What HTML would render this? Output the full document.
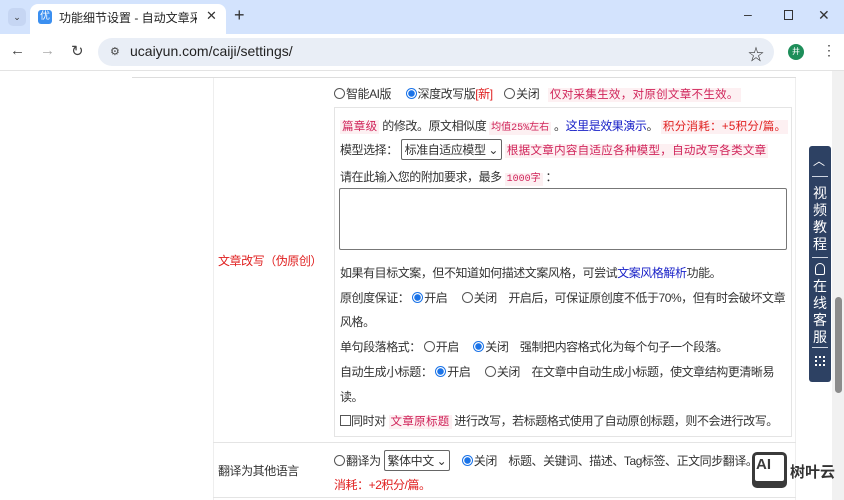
<!DOCTYPE html>
<html><head><meta charset="utf-8"><style>
*{margin:0;padding:0;box-sizing:border-box}
body{width:844px;height:500px;overflow:hidden;background:#fff;font-family:"Liberation Sans","Noto Sans CJK SC",sans-serif;font-size:12px;color:#333;position:relative}
.abs{position:absolute;white-space:nowrap}
.c{letter-spacing:-0.45px}
.tabbar{position:absolute;left:0;top:0;width:844px;height:34px;background:#d3e3fd}
.toolbar{position:absolute;left:0;top:34px;width:844px;height:36px;background:#fff}
.tab{position:absolute;left:30px;top:4px;width:196px;height:30px;background:#fff;border-radius:8px 8px 0 0}
.url{position:absolute;left:98px;top:38px;width:676px;height:28px;background:#e9eef6;border-radius:14px}
.pink{background:#fdf0f2;color:#d0245a;padding:1px 2px;font-family:"Liberation Mono","Noto Sans CJK SC",monospace;font-size:10px;letter-spacing:0}
.pk{background:#fdf0f2;color:#d0245a;padding:1px 2px;font-size:11.5px;letter-spacing:0.3px}
.red{color:#e02020}
.blue{color:#1a22c8}
.radio{display:inline-block;width:11px;height:11px;border:1px solid #555;border-radius:50%;vertical-align:-1px;margin-right:1px}
.radio.on{border:1px solid #1a73e8;background:radial-gradient(circle,#1a73e8 3px,#fff 3.5px)}
.sel{display:inline-block;border:1px solid #666;border-radius:2px;padding:1px 3px;font-size:12px}
</style></head><body>
<div class="tabbar"></div>
<div class="abs" style="left:8px;top:8px;width:18px;height:18px;border-radius:5px;background:#c6d6f3;font-size:9px;text-align:center;line-height:18px">⌄</div>
<div class="tab"></div>
<div class="abs" style="left:38px;top:10px;width:14px;height:14px;background:#3b8ff0;border-radius:3px;color:#fff;font-size:10px;text-align:center;line-height:14px">优</div>
<div class="abs" style="left:59px;top:9px;width:138px;overflow:hidden;font-size:12px;color:#222">功能细节设置 - 自动文章采集II</div>
<div class="abs" style="left:206px;top:8px;font-size:13px;color:#333">✕</div>
<div class="abs" style="left:234px;top:5px;font-size:18px;color:#333">+</div>
<div class="abs" style="left:744px;top:6px;font-size:14px">–</div>
<div class="abs" style="left:784px;top:10px;width:9px;height:10px;border:1px solid #333"></div>
<div class="abs" style="left:818px;top:7px;font-size:14px">✕</div>
<div class="toolbar"></div>
<div class="abs" style="left:10px;top:42px;font-size:15px;color:#444">←</div>
<div class="abs" style="left:40px;top:42px;font-size:15px;color:#aaa">→</div>
<div class="abs" style="left:71px;top:42px;font-size:15px;color:#444">↻</div>
<div class="url"></div>
<div class="abs" style="left:110px;top:45px;font-size:11px;color:#444">⚙</div>
<div class="abs" style="left:130px;top:43px;font-size:14px;color:#222">ucaiyun.com/caiji/settings/</div>
<div class="abs" style="left:748px;top:41px;font-size:16px;color:#333">☆</div>
<div class="abs" style="left:788px;top:44px;width:16px;height:16px;border-radius:50%;background:#1e8e5a;color:#fff;font-size:8px;text-align:center;line-height:16px">井</div>
<div class="abs" style="left:822px;top:42px;font-size:14px;color:#444">⋮</div>
<div class="abs" style="left:0;top:70px;width:844px;height:1px;background:#e3e3e3"></div>
<!-- page -->
<div class="abs" style="left:132px;top:77px;width:664px;height:1px;background:#ddd"></div>
<div class="abs" style="left:213px;top:78px;width:1px;height:422px;background:#eee"></div>
<div class="abs" style="left:795px;top:78px;width:1px;height:422px;background:#eee"></div>
<div class="abs c" style="left:334px;top:85px"><span class="radio"></span>智能AI版 &nbsp;&nbsp;&nbsp; <span class="radio on"></span>深度改写版<span class="red">[新]</span> &nbsp;&nbsp; <span class="radio"></span>关闭 &nbsp; <span class="pk">仅对采集生效，对原创文章不生效。</span></div>
<div class="abs" style="left:334px;top:107px;width:458px;height:330px;border:1px solid #e4e4e4"></div>
<div class="abs c" style="left:340px;top:117px"><span class="pk">篇章级</span> 的修改。原文相似度 <span class="pink">均值25%左右</span> 。<span class="blue">这里是效果演示</span>。 <span class="pk" style="color:#e02020">积分消耗：+5积分/篇。</span></div>
<div class="abs c" style="left:340px;top:139px">模型选择： <span class="sel">标准自适应模型 ⌄</span> <span class="pk">根据文章内容自适应各种模型，自动改写各类文章</span></div>
<div class="abs c" style="left:340px;top:168px">请在此输入您的附加要求，最多 <span class="pink">1000字</span> ：</div>
<div class="abs" style="left:339px;top:188px;width:448px;height:62px;border:1px solid #777;border-radius:2px"></div>
<div class="abs c" style="left:340px;top:264px">如果有目标文案，但不知道如何描述文案风格，可尝试<span class="blue">文案风格解析</span>功能。</div>
<div class="abs c" style="left:340px;top:289px">原创度保证： <span class="radio on"></span>开启 &nbsp;&nbsp;&nbsp; <span class="radio"></span>关闭 &nbsp;&nbsp; 开启后，可保证原创度不低于70%，但有时会破坏文章</div>
<div class="abs c" style="left:340px;top:313px">风格。</div>
<div class="abs c" style="left:340px;top:338px">单句段落格式： <span class="radio"></span>开启 &nbsp;&nbsp;&nbsp; <span class="radio on"></span>关闭 &nbsp;&nbsp; 强制把内容格式化为每个句子一个段落。</div>
<div class="abs c" style="left:340px;top:363px">自动生成小标题： <span class="radio on"></span>开启 &nbsp;&nbsp;&nbsp; <span class="radio"></span>关闭 &nbsp;&nbsp; 在文章中自动生成小标题，使文章结构更清晰易</div>
<div class="abs c" style="left:340px;top:388px">读。</div>
<div class="abs c" style="left:340px;top:412px"><span style="display:inline-block;width:11px;height:11px;border:1px solid #555;vertical-align:-1px"></span>同时对 <span class="pk">文章原标题</span> 进行改写，若标题格式使用了自动原创标题，则不会进行改写。</div>
<div class="abs red c" style="left:218px;top:252px">文章改写（伪原创）</div>
<div class="abs" style="left:213px;top:442px;width:583px;height:1px;background:#e4e4e4"></div>
<div class="abs c" style="left:218px;top:462px">翻译为其他语言</div>
<div class="abs c" style="left:334px;top:450px"><span class="radio"></span>翻译为 <span class="sel">繁体中文 ⌄</span> &nbsp;&nbsp; <span class="radio on"></span>关闭 &nbsp;&nbsp; 标题、关键词、描述、Tag标签、正文同步翻译。<span class="red">积分</span></div>
<div class="abs red c" style="left:334px;top:476px">消耗：+2积分/篇。</div>
<div class="abs" style="left:213px;top:497px;width:583px;height:1px;background:#e4e4e4"></div>
<!-- side panel -->
<div class="abs" style="left:809px;top:146px;width:22px;height:236px;background:#2d4163;border-radius:3px"></div>
<div class="abs" style="left:813px;top:152px;color:#fff;font-size:12px">︿</div>
<div class="abs" style="left:812px;top:176px;width:16px;height:1px;background:#cfd6e2"></div>
<div class="abs" style="left:812px;top:185px;width:16px;color:#fff;font-size:14px;line-height:17px;white-space:normal;text-align:center">视频教程</div>
<div class="abs" style="left:812px;top:257px;width:16px;height:1px;background:#cfd6e2"></div>
<div class="abs" style="left:815px;top:263px;width:10px;height:12px;border:1.5px solid #fff;border-radius:5px 5px 2px 2px"></div>
<div class="abs" style="left:812px;top:278px;width:16px;color:#fff;font-size:14px;line-height:17px;white-space:normal;text-align:center">在线客服</div>
<div class="abs" style="left:812px;top:347px;width:16px;height:1px;background:#cfd6e2"></div>
<div class="abs" style="left:815px;top:356px;width:10px;height:10px;border:2px dotted #fff"></div>
<!-- scrollbar -->
<div class="abs" style="left:832px;top:71px;width:12px;height:429px;background:#f1f1f1"></div>
<div class="abs" style="left:835px;top:297px;width:7px;height:96px;background:#8c8c8c;border-radius:4px"></div>
<!-- logo -->
<div class="abs" style="left:752px;top:452px;width:35px;height:36px;background:#3a3a3a;border-radius:5px"></div>
<div class="abs" style="left:755px;top:455px;width:29px;height:26px;background:#fff;border-radius:2px;color:#3a3a3a;font-weight:bold;font-size:15px;line-height:20px;padding-left:1px">AI</div>
<div class="abs" style="left:790px;top:461px;font-size:15px;font-weight:bold;color:#333">树叶云</div>
</body></html>
